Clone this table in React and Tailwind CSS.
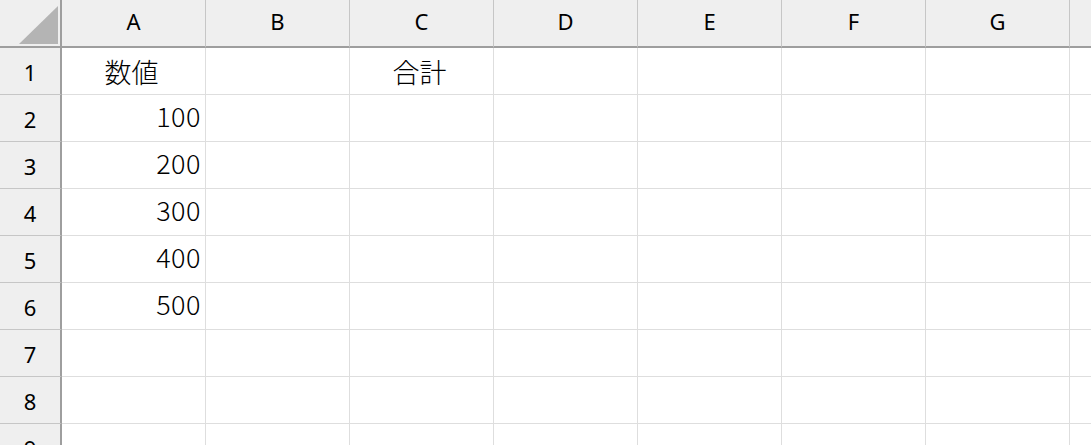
import React from "react";

const cols = ["A", "B", "C", "D", "E", "F", "G", "H"];
const rows = [1, 2, 3, 4, 5, 6, 7, 8, 9];
const data = {
  "1-A": { v: "数値", align: "center" },
  "1-C": { v: "合計", align: "center" },
  "2-A": { v: "100", align: "right" },
  "3-A": { v: "200", align: "right" },
  "4-A": { v: "300", align: "right" },
  "5-A": { v: "400", align: "right" },
  "6-A": { v: "500", align: "right" },
};

export default function App() {
  return (
    <div className="w-[1091px] h-[445px] overflow-hidden bg-white">
      <div className="grid grid-cols-[62px_repeat(8,144px)] grid-rows-[48px_repeat(9,47px)] w-[1216px]">
        <div className="bg-[#efefef] border-r-2 border-b-2 border-[#9e9e9e] flex items-end justify-end pr-[2px] pb-[2px]">
          <svg width="39" height="38" viewBox="0 0 39 38">
            <polygon points="39,0 39,38 0,38" fill="#b4b4b4" />
          </svg>
        </div>
        {cols.map((c) => (
          <div
            key={c}
            className="bg-[#efefef] border-b-2 border-b-[#9e9e9e] border-r border-r-[#c6c6c6] flex items-center justify-center text-[22px] text-black font-['Noto_Sans',sans-serif] pb-[4px]"
          >
            {c}
          </div>
        ))}
        {rows.map((r) => (
          <React.Fragment key={r}>
            <div className="bg-[#efefef] border-r-2 border-r-[#9e9e9e] border-b border-b-[#c6c6c6] flex items-center justify-center text-[22px] text-black font-['Noto_Sans',sans-serif] pt-[2px]">
              {r}
            </div>
            {cols.map((c) => {
              const d = data[`${r}-${c}`];
              return (
                <div
                  key={c}
                  className={
                    "border-r border-b border-[#dedede] flex items-center text-[27px] leading-none font-light text-black font-['Noto_Sans_CJK_JP',sans-serif] pr-[4px] " +
                    (d && d.align === "right" ? "justify-end pb-[6px] tracking-[0.5px]" : "justify-center")
                  }
                >
                  {d ? d.v : ""}
                </div>
              );
            })}
          </React.Fragment>
        ))}
      </div>
    </div>
  );
}
